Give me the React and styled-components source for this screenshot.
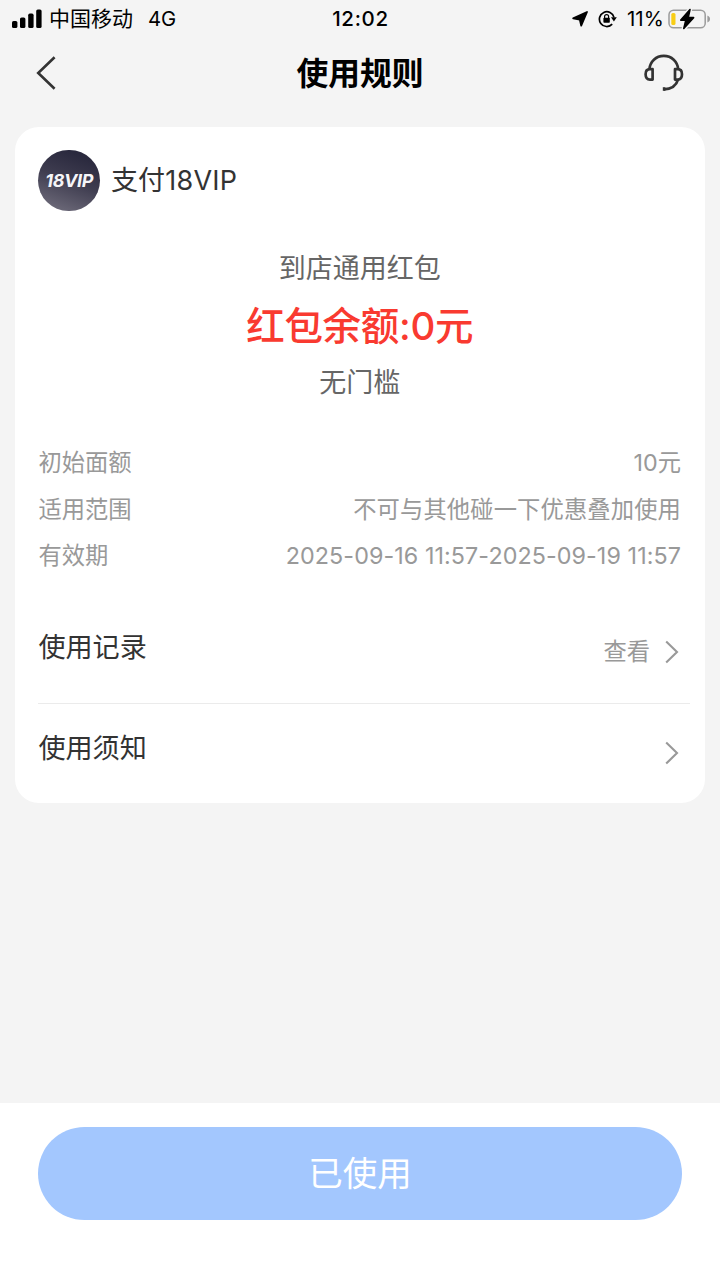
import React from "react";
import styled, { createGlobalStyle } from "styled-components";

const details = [
  { label: "初始面额", value: "10元" },
  { label: "适用范围", value: "不可与其他碰一下优惠叠加使用", spacing: "0.12px" },
  { label: "有效期", value: "2025-09-16 11:57-2025-09-19 11:57", spacing: "0.08px" },
];

export default function App() {
  return (
    <Page>
      <GlobalStyle />
      <StatusBar>
        <StatusLeft>
          <SignalIcon />
          <Carrier>中国移动</Carrier>
          <Network>4G</Network>
        </StatusLeft>
        <Clock>12:02</Clock>
        <StatusRight>
          <LocationIcon />
          <LockIcon />
          <Percent>11%</Percent>
          <BatteryIcon />
        </StatusRight>
      </StatusBar>
      <NavBar>
        <NavButton aria-label="返回">
          <BackIcon />
        </NavButton>
        <NavTitle>使用规则</NavTitle>
        <NavButton aria-label="客服">
          <HeadsetIcon />
        </NavButton>
      </NavBar>
      <Card>
        <Merchant>
          <Avatar>
            <AvatarText>18VIP</AvatarText>
          </Avatar>
          <MerchantName>支付18VIP</MerchantName>
        </Merchant>
        <Summary>
          <SummaryText>到店通用红包</SummaryText>
          <Amount>红包余额:0元</Amount>
          <SummaryText>无门槛</SummaryText>
        </Summary>
        <Details>
          {details.map((item) => (
            <DetailRow key={item.label}>
              <span>{item.label}</span>
              <DetailValue $spacing={item.spacing}>{item.value}</DetailValue>
            </DetailRow>
          ))}
        </Details>
        <LinkRow $height="124px" $top="48px" $border>
          <LinkTitle>使用记录</LinkTitle>
          <LinkAction>
            查看
            <ChevronIcon />
          </LinkAction>
        </LinkRow>
        <LinkRow $height="99px" $top="25px">
          <LinkTitle>使用须知</LinkTitle>
          <LinkAction>
            <ChevronIcon />
          </LinkAction>
        </LinkRow>
      </Card>
      <Footer>
        <UsedButton>已使用</UsedButton>
      </Footer>
    </Page>
  );
}

// Icons
const SignalIcon = () => (
  <svg width="30" height="20" viewBox="0 0 30 20" fill="#000">
    <rect x="0" y="12" width="5.4" height="7" rx="1.6" />
    <rect x="8" y="8.4" width="5.4" height="10.6" rx="1.6" />
    <rect x="16.2" y="4.6" width="5.4" height="14.4" rx="1.6" />
    <rect x="24.2" y="0.4" width="5.4" height="18.6" rx="1.6" />
  </svg>
);

const LocationIcon = () => (
  <svg width="16" height="16" viewBox="0 0 16 16">
    <path
      d="M15 1 L9.2 14.6 L7.8 8.6 L1.2 7.4 Z"
      fill="#000"
      stroke="#000"
      strokeWidth="1.8"
      strokeLinejoin="round"
    />
  </svg>
);

const LockIcon = () => (
  <svg width="19" height="18" viewBox="0 0 19 18" fill="none" stroke="#000">
    <path d="M16 7.4 A7.4 7.4 0 1 0 14.2 14.2" strokeWidth="1.7" />
    <path d="M13 7.3 H18.8 L15.9 11.4 Z" fill="#000" stroke="none" />
    <path d="M6.6 8.2 V6.6 A2 2 0 0 1 10.6 6.6 V8.2" strokeWidth="1.2" />
    <rect x="5.4" y="7.8" width="6.4" height="5" rx="0.8" fill="#000" stroke="none" />
  </svg>
);

const BatteryIcon = () => (
  <svg width="43" height="22" viewBox="0 0 43 22">
    <rect x="1" y="2.2" width="36.2" height="17.6" rx="4.6" fill="none" stroke="#9b9b9b" strokeWidth="1.5" />
    <path d="M39.4 7.6 C41.3 8.3 42 9.6 42 11 S41.3 13.7 39.4 14.4 Z" fill="#9b9b9b" />
    <rect x="3.3" y="5" width="4.2" height="12" rx="1.6" fill="#f8cd15" />
    <path
      d="M22 1.6 L12.8 12.1 H17.8 L15.8 20.4 L25.6 9.6 H20.2 Z"
      fill="#000"
      stroke="#f4f4f4"
      strokeWidth="4.4"
      strokeLinejoin="round"
      paintOrder="stroke"
    />
    <path d="M22 1.6 L12.8 12.1 H17.8 L15.8 20.4 L25.6 9.6 H20.2 Z" fill="#000" stroke="#000" strokeWidth="1.6" strokeLinejoin="round" />
  </svg>
);

const BackIcon = () => (
  <svg width="20" height="34" viewBox="0 0 20 34" fill="none" stroke="#333" strokeWidth="2.6">
    <path d="M18.6 1.2 L2.2 17 L18.6 32.8" />
  </svg>
);

const HeadsetIcon = () => (
  <svg width="40" height="38" viewBox="0 0 40 38" fill="none" stroke="#333" strokeWidth="2.7">
    <path d="M5.4 15.2 C6 7.6 12 1.8 19.8 1.8 S33.6 7.6 34.2 15.2" />
    <path d="M8.6 15.2 H6 C3.2 15.2 1.6 17 1.6 20.3 S3.2 25.6 6 25.6 H8.6 Z" strokeLinejoin="round" />
    <path d="M31 15.2 H33.6 C36.4 15.2 38 17 38 20.3 S36.4 25.6 33.6 25.6 H31 Z" strokeLinejoin="round" />
    <path d="M34 25.6 C32.4 31.4 27.4 35 19.8 35.4" />
    <path d="M18.8 35 H21.4" strokeWidth="3.6" />
  </svg>
);

const ChevronIcon = () => (
  <svg width="14" height="24" viewBox="0 0 14 24" fill="none" stroke="#999" strokeWidth="2.1">
    <path d="M1.2 1.6 L12 12.1 L1.2 22.6" />
  </svg>
);

const GlobalStyle = createGlobalStyle`
  * {
    box-sizing: border-box;
  }
  body {
    margin: 0;
    background: #f4f4f4;
    font-family: Inter, "Noto Sans CJK SC", sans-serif;
  }
  svg {
    display: block;
    flex-shrink: 0;
  }
`;
const Page = styled.div`
  width: 720px;
  height: 1280px;
  display: flex;
  flex-direction: column;
  background: #f4f4f4;
  overflow: hidden;
`;
const StatusBar = styled.header`
  height: 37px;
  padding: 0 9px 0 12px;
  display: grid;
  grid-template-columns: 1fr auto 1fr;
  align-items: center;
  color: #000;
  font-size: 20.5px;
  line-height: 36px;
`;
const StatusLeft = styled.div`
  display: flex;
  align-items: center;
`;
const Carrier = styled.span`
  margin-left: 7px;
  font-size: 21px;
`;
const Network = styled.span`
  margin-left: 15px;
  font-size: 20.3px;
`;
const Clock = styled.span`
  margin-right: 2px;
  font-weight: 500;
  letter-spacing: 0.7px;
`;
const StatusRight = styled.div`
  display: flex;
  align-items: center;
  justify-content: flex-end;
  gap: 10px;
`;
const Percent = styled.span`
  margin-right: -6px;
  font-size: 20.5px;
  letter-spacing: 0.1px;
`;
const NavBar = styled.nav`
  height: 72px;
  padding: 0 36px;
  display: flex;
  align-items: center;
  justify-content: space-between;
`;
const NavButton = styled.button`
  width: 40px;
  padding: 0;
  border: 0;
  background: none;
`;
const NavTitle = styled.h1`
  margin: 0;
  padding-top: 2px;
  color: #000;
  font-size: 31.8px;
  font-weight: 700;
  line-height: 40px;
`;
const Card = styled.section`
  width: 690px;
  height: 676px;
  margin: 18px 15px 0;
  padding: 22.5px 0 0 23.4px;
  border-radius: 24px;
  background: #fff;
`;
const Merchant = styled.div`
  display: flex;
  align-items: center;
  height: 62px;
`;
const Avatar = styled.div`
  width: 61.5px;
  height: 61.5px;
  display: flex;
  align-items: center;
  justify-content: center;
  border-radius: 50%;
  background: linear-gradient(200deg, #2a293e 15%, #3f3d50 50%, #706d7c 95%);
`;
const AvatarText = styled.span`
  color: #f5f5f8;
  font-size: 18px;
  font-style: italic;
  font-weight: 700;
  letter-spacing: -0.4px;
`;
const MerchantName = styled.span`
  margin-left: 11px;
  color: #333;
  font-size: 27px;
  line-height: 40px;
  letter-spacing: 0.2px;
`;
const Summary = styled.div`
  margin: 37.5px 24px 0 0;
  display: flex;
  flex-direction: column;
  align-items: center;
`;
const SummaryText = styled.p`
  margin: 0;
  color: #666;
  font-size: 27px;
  line-height: 40px;
`;
const Amount = styled.p`
  margin: 12px 0;
  color: #f93a30;
  font-size: 38.5px;
  font-weight: 500;
  line-height: 50px;
  letter-spacing: -0.3px;
`;
const Details = styled.div`
  margin: 37px 24px 0 0;
`;
const DetailRow = styled.div`
  display: flex;
  justify-content: space-between;
  color: #999;
  font-size: 23.3px;
  line-height: 46.6px;
`;
const DetailValue = styled.span`
  letter-spacing: ${({ $spacing }) => $spacing || "0"};
`;
const LinkRow = styled.div`
  height: ${({ $height }) => $height};
  margin-right: 15px;
  padding: ${({ $top }) => $top} 11px 0 0;
  display: flex;
  align-items: flex-start;
  justify-content: space-between;
  border-bottom: ${({ $border }) => ($border ? "1.5px solid #ebebeb" : "0")};
`;
const LinkTitle = styled.span`
  color: #333;
  font-size: 27.1px;
  line-height: 40px;
`;
const LinkAction = styled.span`
  margin-top: 4.5px;
  display: flex;
  align-items: center;
  gap: 15px;
  color: #999;
  font-size: 23.3px;
  line-height: 40px;
  min-height: 40px;
`;
const Footer = styled.footer`
  height: 177px;
  margin-top: auto;
  padding: 23.5px 38.4px 0;
  background: #fff;
`;
const UsedButton = styled.button`
  display: block;
  width: 100%;
  height: 93.5px;
  padding: 0;
  border: 0;
  border-radius: 47px;
  background: #a3c7fe;
  color: #fff;
  font-family: inherit;
  font-size: 34.5px;
  line-height: 94px;
`;
